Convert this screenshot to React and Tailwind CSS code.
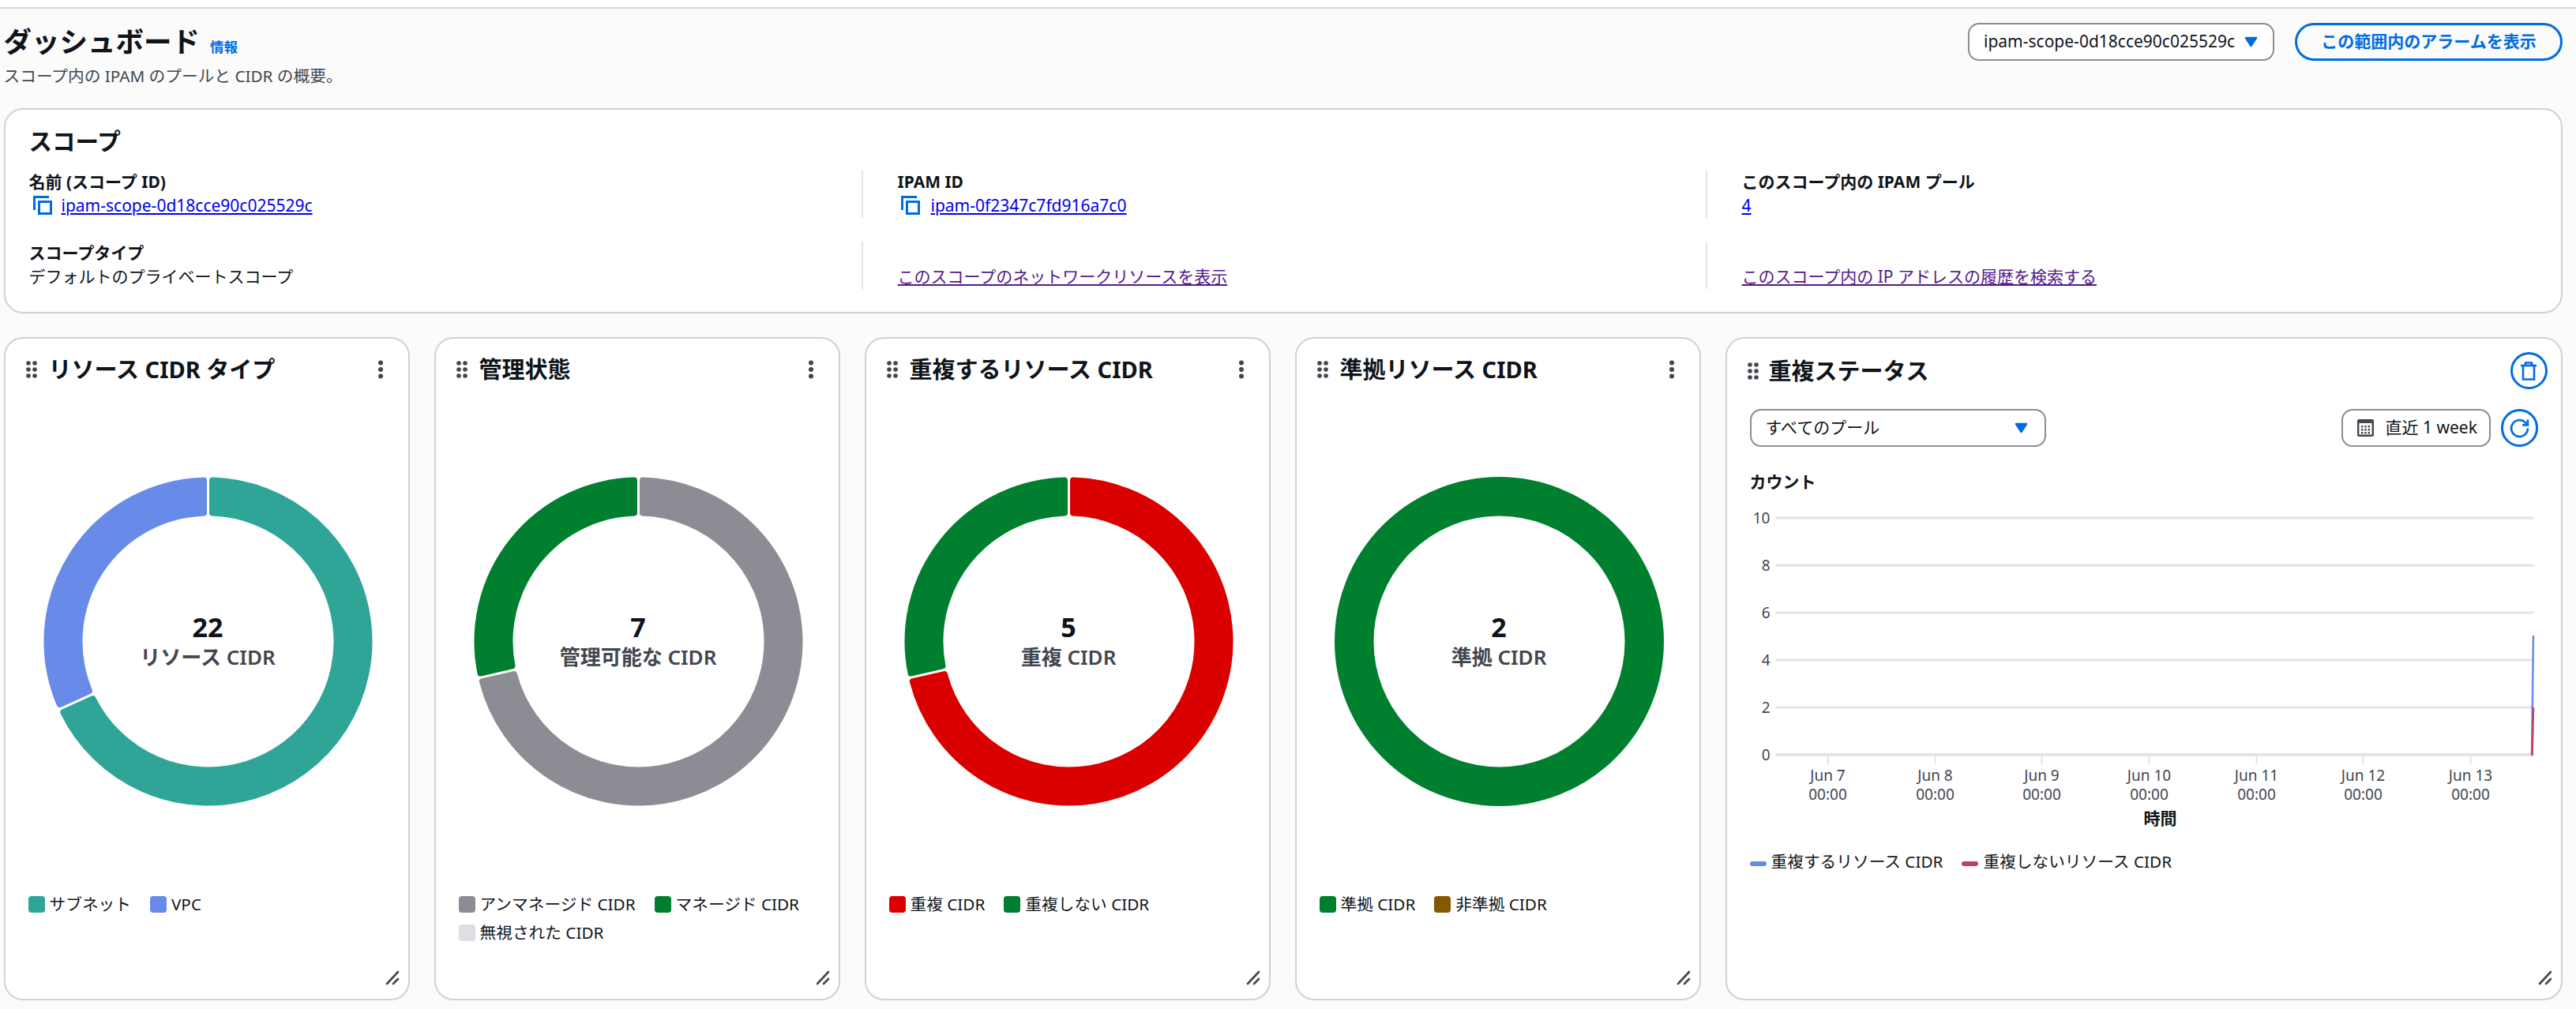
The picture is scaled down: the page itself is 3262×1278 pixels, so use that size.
const BLUE = "#006ce0";

function pt(r, deg) {
  const a = (deg * Math.PI) / 180;
  return [r * Math.sin(a), -r * Math.cos(a)];
}

function slice(from, to) {
  const ro = 204;
  const ri = 163;
  const g = 5.5;
  const oA = (Math.asin(g / ro) * 180) / Math.PI;
  const iA = (Math.asin(g / ri) * 180) / Math.PI;
  const p1 = pt(ro, from + oA);
  const p2 = pt(ro, to - oA);
  const p3 = pt(ri, to - iA);
  const p4 = pt(ri, from + iA);
  const large = to - from > 180 ? 1 : 0;
  return `M${p1[0]} ${p1[1]}A${ro} ${ro} 0 ${large} 1 ${p2[0]} ${p2[1]}L${p3[0]} ${p3[1]}A${ri} ${ri} 0 ${large} 0 ${p4[0]} ${p4[1]}Z`;
}

function Donut({ segments, value, label }) {
  return (
    <div className="relative ml-[48px] mt-[118px] h-[417px] w-[417px]">
      <svg viewBox="-208.5 -208.5 417 417" className="h-[417px] w-[417px]">
        {segments.length === 1 ? (
          <circle r="183.75" fill="none" stroke={segments[0].color} strokeWidth="49.5" />
        ) : (
          segments.map((s) => (
            <path key={s.color} d={slice(s.from, s.to)} fill={s.color} stroke={s.color} strokeWidth="8" strokeLinejoin="round" />
          ))
        )}
      </svg>
      <div className="absolute inset-0 flex flex-col items-center justify-center">
        <div className="text-[34px] font-bold leading-[38px] text-[#0f141a]">{value}</div>
        <div className="text-[26px] font-semibold leading-[38px] text-[#424650]">{label}</div>
      </div>
    </div>
  );
}

function DragHandle() {
  return (
    <svg width="14" height="22" viewBox="0 0 14 22" className="shrink-0" fill="#424650">
      <circle cx="3" cy="3" r="2.8" />
      <circle cx="11" cy="3" r="2.8" />
      <circle cx="3" cy="11" r="2.8" />
      <circle cx="11" cy="11" r="2.8" />
      <circle cx="3" cy="19" r="2.8" />
      <circle cx="11" cy="19" r="2.8" />
    </svg>
  );
}

function Kebab() {
  return (
    <svg width="8" height="24" viewBox="0 0 8 24" fill="#424650">
      <circle cx="4" cy="3.5" r="3" />
      <circle cx="4" cy="12" r="3" />
      <circle cx="4" cy="20.5" r="3" />
    </svg>
  );
}

function Resize() {
  return (
    <svg width="20" height="20" viewBox="0 0 20 20" className="absolute bottom-[16px] right-[9px]" stroke="#424650" strokeWidth="2.6" strokeLinecap="round" fill="none">
      <path d="M16 2 L2 17" />
      <path d="M16 11 L10 17" />
    </svg>
  );
}

function Caret({ className }) {
  return (
    <svg width="17" height="14" viewBox="0 0 17 14" className={className}>
      <path d="M2 2 H15 L8.5 12 Z" fill={BLUE} stroke={BLUE} strokeWidth="2.5" strokeLinejoin="round" />
    </svg>
  );
}

function CopyIcon() {
  return (
    <svg width="24" height="24" viewBox="0 0 24 24" fill="none" stroke={BLUE} strokeWidth="3" className="shrink-0">
      <path d="M1.5 18 V1.5 H20" />
      <rect x="7.5" y="7.5" width="15" height="15" />
    </svg>
  );
}

function LegendItem({ color, children }) {
  return (
    <div className="flex h-[21px] items-center gap-[6px] whitespace-nowrap text-[20.7px] leading-[21px] text-[#0f141a]">
      <span className="h-[21px] w-[21px] rounded-[4px]" style={{ backgroundColor: color }} />
      <span>{children}</span>
    </div>
  );
}

function DonutCard({ title, segments, value, label, legend }) {
  return (
    <section className="relative h-[840px] rounded-[24px] border-2 border-[#d1d1d6] bg-white">
      <header className="mt-[21px] flex h-[36px] items-center justify-between pl-[26px] pr-[31px]">
        <div className="flex items-center gap-[15px]">
          <DragHandle />
          <h2 className="whitespace-nowrap text-[29px] font-bold leading-[36px] text-[#0f141a]">{title}</h2>
        </div>
        <Kebab />
      </header>
      <Donut segments={segments} value={value} label={label} />
      <div className="mt-[114px] flex flex-wrap gap-x-[24px] gap-y-[15px] pl-[29px] pr-[20px]">
        {legend.map((l) => (
          <LegendItem key={l.text} color={l.color}>
            {l.text}
          </LegendItem>
        ))}
      </div>
      <Resize />
    </section>
  );
}

const X = (x) => x - 2186.5;
const Y = (y) => y - 640;
const yLabels = [
  [10, 656],
  [8, 716],
  [6, 776],
  [4, 836],
  [2, 896],
  [0, 956],
];
const days = [
  ["Jun 7", 2314],
  ["Jun 8", 2450],
  ["Jun 9", 2585],
  ["Jun 10", 2721],
  ["Jun 11", 2857],
  ["Jun 12", 2992],
  ["Jun 13", 3128],
];

function Chart() {
  return (
    <svg width="1056" height="420" viewBox="0 0 1056 420" className="mt-[16px] block">
      {yLabels.map(([v, y]) => (
        <g key={v}>
          <line x1={X(2248)} x2={X(3208)} y1={Y(y)} y2={Y(y)} stroke="#e3e3e8" strokeWidth={v === 0 ? 4 : 3} />
          <text x={X(2241)} y={Y(y) + 7} textAnchor="end" fontSize="19" fill="#424650">
            {v}
          </text>
        </g>
      ))}
      {days.map(([d, x]) => (
        <g key={d} fontSize="19" fill="#424650" textAnchor="middle">
          <line x1={X(x)} x2={X(x)} y1={Y(957)} y2={Y(968)} stroke="#e3e3e8" strokeWidth="2" />
          <text x={X(x)} y={Y(989)}>{d}</text>
          <text x={X(x)} y={Y(1013)}>00:00</text>
        </g>
      ))}
      <text x={X(2735)} y={Y(1044)} textAnchor="middle" fontSize="21" fontWeight="700" fill="#0f141a">
        時間
      </text>
      <polyline points={`${X(3205.5)},${Y(956)} ${X(3207.5)},${Y(805)}`} fill="none" stroke="#688ae8" strokeWidth="2.5" />
      <polyline points={`${X(3206)},${Y(957)} ${X(3207.5)},${Y(896)}`} fill="none" stroke="#c33d69" strokeWidth="2.5" />
    </svg>
  );
}

function LineLegend({ color, children }) {
  return (
    <div className="flex items-center gap-[6px] whitespace-nowrap text-[20.7px] leading-[21px] text-[#0f141a]">
      <span className="mt-[4px] h-[6px] w-[21px] rounded-full" style={{ backgroundColor: color }} />
      <span>{children}</span>
    </div>
  );
}

function StatusCard() {
  return (
    <section className="relative h-[840px] rounded-[24px] border-2 border-[#d1d1d6] bg-white">
      <header className="mt-[17px] flex h-[47px] items-center justify-between pl-[26px] pr-[17px]">
        <div className="flex items-center gap-[13px]">
          <DragHandle />
          <h2 className="whitespace-nowrap text-[29px] font-bold leading-[36px] text-[#0f141a]">重複ステータス</h2>
        </div>
        <button className="flex h-[47px] w-[47px] items-center justify-center rounded-full border-[3px] border-[#006ce0]">
          <svg width="24" height="24" viewBox="0 0 24 24" fill="none" stroke={BLUE} strokeWidth="2.6">
            <path d="M2 5 H22" />
            <path d="M8 5 V1.5 H16 V5" />
            <path d="M5 5 V22.5 H19 V5" />
          </svg>
        </button>
      </header>
      <div className="mt-[25px] flex items-center justify-between pl-[29px] pr-[29px]">
        <div className="flex h-[48px] w-[375px] items-center justify-between rounded-[14px] border-2 border-[#8c8c94] pl-[18px] pr-[21px] text-[21px] text-[#0f141a]">
          <span>すべてのプール</span>
          <Caret />
        </div>
        <div className="flex items-center gap-[13px]">
          <div className="flex h-[48px] w-[189px] items-center gap-[15px] whitespace-nowrap rounded-[14px] border-2 border-[#8c8c94] pl-[18px] text-[21px] text-[#0f141a]">
            <svg width="21" height="22" viewBox="0 0 21 22" fill="none" className="shrink-0">
              <rect x="1.2" y="1.2" width="18.6" height="19.6" rx="1" stroke="#424650" strokeWidth="2.4" />
              <rect x="1" y="1" width="19" height="4" fill="#424650" />
              <path d="M5 8h2.4v2.4H5zM9.3 8h2.4v2.4H9.3zM13.6 8H16v2.4h-2.4zM5 12h2.4v2.4H5zM9.3 12h2.4v2.4H9.3zM13.6 12H16v2.4h-2.4zM5 16h2.4v2.4H5zM9.3 16h2.4v2.4H9.3zM13.6 16H16v2.4h-2.4z" fill="#424650" />
            </svg>
            <span>直近 1 week</span>
          </div>
          <button className="flex h-[48px] w-[47px] items-center justify-center rounded-full border-[3px] border-[#006ce0]">
            <svg width="25" height="25" viewBox="0 0 24 24" fill="none" stroke={BLUE} strokeWidth="2.6">
              <path d="M22 12 A10 10 0 1 1 18.8 4.7 L22 8" />
              <path d="M22 1.5 V8 H15.5" />
            </svg>
          </button>
        </div>
      </div>
      <div className="mt-[30px] pl-[29px] text-[21px] font-bold leading-[28px] text-[#0f141a]">カウント</div>
      <Chart />
      <div className="mt-[21px] flex gap-[24px] pl-[29px]">
        <LineLegend color="#688ae8">重複するリソース CIDR</LineLegend>
        <LineLegend color="#c33d69">重複しないリソース CIDR</LineLegend>
      </div>
      <Resize />
    </section>
  );
}

function Cell({ label, first, children }) {
  return (
    <div className={first ? "h-[60px]" : "h-[60px] border-l-2 border-[#e3e3e8] pl-[44px]"}>
      <div className="text-[21px] font-bold leading-[28px] text-[#0f141a]">{label || "\u00a0"}</div>
      <div className="mt-[1px] flex h-[30px] items-center text-[21px] leading-[30px] text-[#0f141a]">{children}</div>
    </div>
  );
}

export default function App() {
  const teal = "#2ea597";
  const periwinkle = "#688ae8";
  const green = "#00802f";
  const gray = "#8c8c94";
  const red = "#db0000";
  const u = 360 / 7;
  return (
    <div className="min-h-screen bg-[#fbfbfc] font-['Noto_Sans','Noto_Sans_CJK_JP',sans-serif]">
      <div className="h-[11px] border-b-2 border-[#d5d5da] bg-white" />
      <div className="w-[3245px] pl-[4.5px]">
        <div className="flex h-[126px] items-start justify-between">
          <div className="pt-[16px]">
            <div className="flex items-baseline gap-[13px]">
              <h1 className="text-[35.5px] font-bold leading-[50px] text-[#0f141a]">ダッシュボード</h1>
              <a className="text-[17.5px] font-bold text-[#006ce0]">情報</a>
            </div>
            <p className="mt-[5px] text-[20.7px] leading-[28px] text-[#424650]">スコープ内の IPAM のプールと CIDR の概要。</p>
          </div>
          <div className="mt-[18px] flex items-center gap-[26px]">
            <div className="flex h-[48px] w-[388px] items-center justify-between rounded-[14px] border-2 border-[#8c8c94] bg-white pl-[18px] pr-[19px] text-[21px] text-[#0f141a]">
              <span className="whitespace-nowrap">ipam-scope-0d18cce90c025529c</span>
              <Caret />
            </div>
            <button className="flex h-[48px] w-[339px] items-center justify-center rounded-full border-[3.5px] border-[#006ce0] text-[21px] font-bold text-[#006ce0]">
              この範囲内のアラームを表示
            </button>
          </div>
        </div>

        <section className="h-[260px] rounded-[24px] border-2 border-[#d1d1d6] bg-white pl-[30px]">
          <h2 className="mt-[20px] text-[29.5px] font-bold leading-[40px] text-[#0f141a]">スコープ</h2>
          <div className="mt-[17px] grid grid-cols-[1054px_1069px_1fr] gap-y-[30px]">
            <Cell first label="名前 (スコープ ID)">
              <span className="ml-[5px] mr-[12px]"><CopyIcon /></span>
              <a className="text-[#0000ee] underline">ipam-scope-0d18cce90c025529c</a>
            </Cell>
            <Cell label="IPAM ID">
              <span className="ml-[4px] mr-[14px]"><CopyIcon /></span>
              <a className="text-[#0000ee] underline">ipam-0f2347c7fd916a7c0</a>
            </Cell>
            <Cell label="このスコープ内の IPAM プール">
              <a className="text-[#0000ee] underline">4</a>
            </Cell>
            <Cell first label="スコープタイプ">
              デフォルトのプライベートスコープ
            </Cell>
            <Cell>
              <a className="text-[#551a8b] underline">このスコープのネットワークリソースを表示</a>
            </Cell>
            <Cell>
              <a className="text-[#551a8b] underline">このスコープ内の IP アドレスの履歴を検索する</a>
            </Cell>
          </div>
        </section>

        <div className="mt-[30px] grid grid-cols-[514px_514px_514px_514px_1060px] gap-x-[31px]">
          <DonutCard
            title="リソース CIDR タイプ"
            value="22"
            label="リソース CIDR"
            segments={[
              { color: teal, from: 0, to: (15 / 22) * 360 },
              { color: periwinkle, from: (15 / 22) * 360, to: 360 },
            ]}
            legend={[
              { color: teal, text: "サブネット" },
              { color: periwinkle, text: "VPC" },
            ]}
          />
          <DonutCard
            title="管理状態"
            value="7"
            label="管理可能な CIDR"
            segments={[
              { color: gray, from: 0, to: 5 * u },
              { color: green, from: 5 * u, to: 360 },
            ]}
            legend={[
              { color: gray, text: "アンマネージド CIDR" },
              { color: green, text: "マネージド CIDR" },
              { color: "#dedee3", text: "無視された CIDR" },
            ]}
          />
          <DonutCard
            title="重複するリソース CIDR"
            value="5"
            label="重複 CIDR"
            segments={[
              { color: red, from: 0, to: 5 * u },
              { color: green, from: 5 * u, to: 360 },
            ]}
            legend={[
              { color: red, text: "重複 CIDR" },
              { color: green, text: "重複しない CIDR" },
            ]}
          />
          <DonutCard
            title="準拠リソース CIDR"
            value="2"
            label="準拠 CIDR"
            segments={[{ color: green }]}
            legend={[
              { color: green, text: "準拠 CIDR" },
              { color: "#855900", text: "非準拠 CIDR" },
            ]}
          />
          <StatusCard />
        </div>
      </div>
    </div>
  );
}
